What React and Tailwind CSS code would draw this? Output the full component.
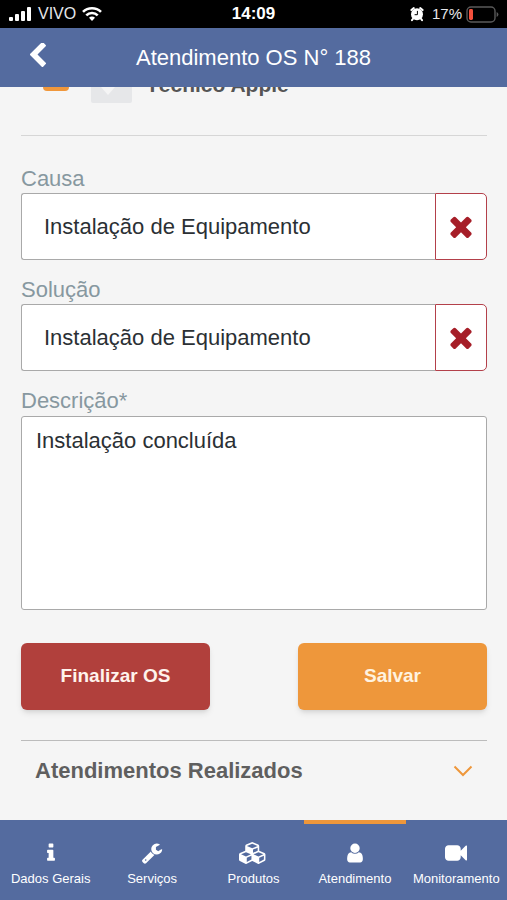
import { useState } from 'react';

const icons = {
  back: {
    box: '410 90 1036 1548',
    d: 'M1427 301l-531 531 531 531q19 19 19 45t-19 45l-166 166q-19 19-45 19t-45-19l-742-742q-19-19-19-45t19-45l742-742q19-19 45-19t45 19l166 166q19 19 19 45t-19 45z',
  },
  times: {
    box: '0 48 1792 1792',
    d: 'M1490 1322q0 40-28 68l-136 136q-28 28-68 28t-68-28l-294-294-294 294q-28 28-68 28t-68-28l-136-136q-28-28-28-68t28-68l294-294-294-294q-28-28-28-68t28-68l136-136q28-28 68-28t68 28l294 294 294-294q28-28 68-28t68 28l136 136q28 28 28 68t-28 68l-294 294 294 294q28 28 28 68z',
  },
  info: {
    box: '0 0 1792 1792',
    d: 'M1216 1344v128q0 26-19 45t-45 19h-512q-26 0-45-19t-19-45v-128q0-26 19-45t45-19h64v-384h-64q-26 0-45-19t-19-45v-128q0-26 19-45t45-19h384q26 0 45 19t19 45v576h64q26 0 45 19t19 45zm-128-1152v192q0 26-19 45t-45 19h-256q-26 0-45-19t-19-45v-192q0-26 19-45t45-19h256q26 0 45 19t19 45z',
  },
  wrench: {
    box: '0 0 1792 1792',
    d: 'M448 1472q0-26-19-45t-45-19-45 19-19 45 19 45 45 19 45-19 19-45zm644-420l-682 682q-37 37-90 37-52 0-91-37l-106-108q-38-36-38-90 0-53 38-91l681-681q39 98 114.5 173.5t173.5 114.5zm634-435q0 39-23 106-47 134-164.5 217.5t-258.5 83.5q-185 0-316.5-131.5t-131.5-316.5 131.5-316.5 316.5-131.5q58 0 121.5 16.5t107.5 46.5q16 11 16 28t-16 28l-293 169v224l193 107q5-3 79-48.5t135.5-81 70.5-35.5q15 0 23.5 10t8.5 25z',
  },
  cubes: {
    box: '0 0 2304 1792',
    d: 'M640 1632l384-192v-314l-384 164v342zm-64-454l404-173-404-173-404 173zm1088 454l384-192v-314l-384 164v342zm-64-454l404-173-404-173-404 173zm-448-293l384-165v-266l-384 164v267zm-64-379l441-189-441-189-441 189zm1088 518v416q0 36-19 67t-52 47l-448 224q-25 14-57 14t-57-14l-448-224q-4-2-7-4-2 2-7 4l-448 224q-25 14-57 14t-57-14l-448-224q-33-16-52-47t-19-67v-416q0-38 21.5-70t56.5-48l434-186v-400q0-38 21.5-70t56.5-48l448-192q23-10 50-10t50 10l448 192q35 16 56.5 48t21.5 70v400l434 186q36 16 57 48t21 70z',
  },
  user: {
    box: '0 0 1792 1792',
    d: 'M1536 1399q0 109-62.5 187t-150.5 78h-854q-88 0-150.5-78t-62.5-187q0-85 8.5-160.5t31.5-152 58.5-131 94-89 134.5-34.5q131 128 313 128t313-128q76 0 134.5 34.5t94 89 58.5 131 31.5 152 8.5 160.5zm-256-887q0 159-112.5 271.5t-271.5 112.5-271.5-112.5-112.5-271.5 112.5-271.5 271.5-112.5 271.5 112.5 112.5 271.5z',
  },
  video: {
    box: '0 0 1792 1792',
    d: 'M1792 352v1088q0 42-39 59-13 5-25 5-27 0-45-19l-403-403v166q0 119-84.5 203.5t-203.5 84.5h-704q-119 0-203.5-84.5t-84.5-203.5v-704q0-119 84.5-203.5t203.5-84.5h704q119 0 203.5 84.5t84.5 203.5v165l403-402q18-19 45-19 12 0 25 5 39 17 39 59z',
  },
};

const tabs = [
  { label: 'Dados Gerais', icon: 'info' },
  { label: 'Serviços', icon: 'wrench' },
  { label: 'Produtos', icon: 'cubes' },
  { label: 'Atendimento', icon: 'user' },
  { label: 'Monitoramento', icon: 'video' },
];

function Icon({ name, className }) {
  return (
    <svg viewBox={icons[name].box} className={className} fill="currentColor" aria-hidden="true">
      <path d={icons[name].d} />
    </svg>
  );
}

function StatusBar() {
  return (
    <div className="grid h-7 grid-cols-3 items-center bg-black px-2 text-white">
      <div className="flex items-center gap-1.5">
        <svg viewBox="0 0 24 16" className="h-4 w-6" fill="currentColor" aria-hidden="true">
          <rect x="1" y="11" width="4" height="4" rx="1" />
          <rect x="7" y="8" width="4" height="7" rx="1" />
          <rect x="13" y="5" width="4" height="10" rx="1" />
          <rect x="19" y="1" width="4" height="14" rx="1" />
        </svg>
        <span className="text-base text-gray-200">VIVO</span>
        <svg viewBox="0 0 20 15" className="h-4 w-5" fill="none" stroke="currentColor" strokeWidth="2.6" aria-hidden="true">
          <path d="M1 5.4a12.8 12.8 0 0 1 18 0" />
          <path d="M4.3 8.9a8 8 0 0 1 11.4 0" />
          <path d="M10 14.4l-3-3.1a4.2 4.2 0 0 1 6 0z" fill="currentColor" stroke="none" />
        </svg>
      </div>
      <span className="text-center text-[17px] font-bold">14:09</span>
      <div className="flex items-center justify-end gap-1">
        <svg viewBox="0 0 14 15" className="mr-1 h-4 w-3.5" aria-hidden="true">
          <path d="M3.200 12l-1.200 1.600M10.800 12l1.200 1.600M1.400 3.600l2.400-2M12.600 3.600l-2.400-2" stroke="white" strokeWidth="2" strokeLinecap="round" />
          <circle cx="7" cy="7.8" r="6" fill="white" />
          <path d="M7.4 4.4v3.800H4.600" fill="none" stroke="black" strokeWidth="1" />
        </svg>
        <span className="text-[15px] text-gray-200">17%</span>
        <svg viewBox="0 0 33 17" className="h-[17px] w-[33px]" aria-hidden="true">
          <rect x="1" y="1" width="28" height="15" rx="4" fill="none" stroke="#5a5a5a" strokeWidth="1.4" />
          <rect x="3" y="3" width="4" height="11" rx="1.4" fill="#f4503c" />
          <path d="M30.6 6v5q1.8-.6 1.8-2.5T30.6 6z" fill="#5a5a5a" />
        </svg>
      </div>
    </div>
  );
}

function ClearableField({ id, label, value, onChange }) {
  return (
    <div className="mb-4">
      <label htmlFor={id} className="block text-[22px] leading-7 text-[#8798a0]">
        {label}
      </label>
      <div className="flex h-[67px]">
        <input
          id={id}
          value={value}
          onChange={(e) => onChange(e.target.value)}
          className="min-w-0 flex-1 rounded-l-[3px] border border-r-0 border-[#a9a9a9] bg-white px-[22px] text-[22px] text-[#2b3034] outline-none"
        />
        <button
          type="button"
          aria-label={`Limpar ${label}`}
          onClick={() => onChange('')}
          className="flex w-[52px] items-center justify-center rounded-r-[5px] border border-[#b3404a] bg-white text-[#a61e28]"
        >
          <Icon name="times" className="size-8" />
        </button>
      </div>
    </div>
  );
}

export default function App() {
  const [causa, setCausa] = useState('Instalação de Equipamento');
  const [solucao, setSolucao] = useState('Instalação de Equipamento');
  const [descricao, setDescricao] = useState('Instalação concluída');
  const active = 'Atendimento';

  return (
    <div className="flex min-h-screen flex-col bg-[#f5f5f5] font-['Liberation_Sans',Arial,sans-serif]">
      <StatusBar />

      <header className="grid h-[59px] grid-cols-[46px_1fr_46px] items-center bg-[#546b9f] text-white">
        <button type="button" aria-label="Voltar" className="flex justify-end pb-1.5">
          <Icon name="back" className="h-6 w-4" />
        </button>
        <h1 className="text-center text-[22px]">Atendimento OS N° 188</h1>
      </header>

      <main className="flex-1 pr-5 pl-[21px]">
        {/* technician row, scrolled under the header */}
        <div className="flex h-4 items-end overflow-hidden pl-[22px]">
          <span className="mb-3 h-6 w-[26px] shrink-0 rounded-[4px] bg-[#f0973b]"></span>
          <span className="ml-[22px] flex h-10 w-[41px] shrink-0 items-end justify-center rounded-[2px] bg-[#e6e7e9] pr-5 pb-0.5">
            <svg viewBox="0 0 20 20" className="ml-3 size-5 shrink-0" aria-hidden="true">
              <path d="M3 6h14l-7 8z" fill="#f5f5f5" />
            </svg>
          </span>
          <span className="mb-1 ml-3.5 text-[21px] leading-7 font-bold text-[#555]">Técnico Apple</span>
        </div>

        <hr className="mt-8 mb-[29px] border-[#d6d6d6]" />

        <form onSubmit={(e) => e.preventDefault()}>
          <ClearableField id="causa" label="Causa" value={causa} onChange={setCausa} />
          <ClearableField id="solucao" label="Solução" value={solucao} onChange={setSolucao} />

          <label htmlFor="descricao" className="block text-[22px] leading-7 text-[#8798a0]">
            Descrição*
          </label>
          <textarea
            id="descricao"
            value={descricao}
            onChange={(e) => setDescricao(e.target.value)}
            className="mt-px block h-[194px] w-full resize-none rounded-[3px] border border-[#a9a9a9] bg-white px-3.5 py-2.5 text-[22px] leading-7 text-[#2b3034] outline-none"
          />

          <div className="mt-[33px] grid grid-cols-2 gap-[88px]">
            <button type="button" className="h-[67px] rounded-md bg-[#b1403c] text-[19px] font-bold text-[#fff3ec] shadow-md">
              Finalizar OS
            </button>
            <button type="submit" className="h-[67px] rounded-md bg-[#ee973b] text-[19px] font-bold text-[#fff3e0] shadow-md">
              Salvar
            </button>
          </div>
        </form>

        <hr className="mt-[30px] border-[#bcbcbc]" />

        <button type="button" className="flex w-full items-center justify-between px-3.5 py-4 text-left">
          <span className="text-[22px] leading-7 font-bold text-[#5f5f5f]">Atendimentos Realizados</span>
          <svg viewBox="0 0 20 12" className="h-3 w-5" fill="none" stroke="#ee973b" strokeWidth="2" aria-hidden="true">
            <path d="M1.5 1.5L10 10l8.5-8.5" />
          </svg>
        </button>
      </main>

      <nav className="grid h-20 grid-cols-5 bg-[#546b9f] text-white">
        {tabs.map((tab) => (
          <a
            key={tab.label}
            href="#"
            aria-current={tab.label === active ? 'page' : undefined}
            className={`flex flex-col items-center gap-[5px] border-t-4 pt-[18px] text-[13px] leading-5 whitespace-nowrap ${
              tab.label === active ? 'border-[#ee973b]' : 'border-transparent'
            }`}
          >
            <Icon name={tab.icon} className={tab.icon === 'cubes' ? 'h-[22px] w-7' : 'size-[22px]'} />
            {tab.label}
          </a>
        ))}
      </nav>
    </div>
  );
}
